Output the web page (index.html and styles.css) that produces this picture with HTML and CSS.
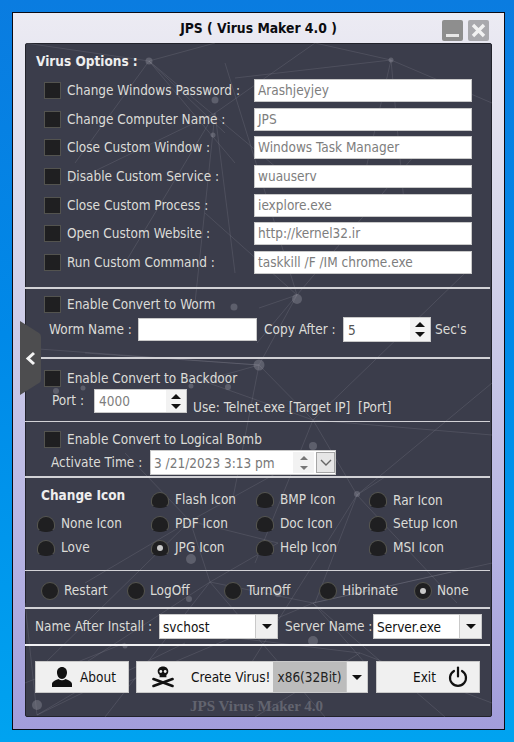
FILE: index.html
```html
<!DOCTYPE html>
<html lang="en">
<head>
<meta charset="utf-8">
<title>JPS Virus Maker 4.0</title>
<link rel="stylesheet" href="styles.css">
</head>
<body>
<div class="window">
  <header class="titlebar">
    <span></span>
    <h1 class="title">JPS ( Virus Maker 4.0 )</h1>
    <div class="winbtns">
      <div class="winbtn min"><svg width="21" height="21" viewBox="0 0 21 21"><rect x="4" y="14" width="13" height="3" fill="#e8e8e8"/></svg></div>
      <div class="winbtn close"><svg width="21" height="21" viewBox="0 0 21 21"><path d="M5 5l11 11M16 5L5 16" stroke="#f2f2f2" stroke-width="3.4"/></svg></div>
    </div>
  </header>
  <main class="panel">
    <svg class="net" width="467" height="674" viewBox="0 0 467 674">
      <g stroke="#8a8c98" stroke-opacity=".24" stroke-width="1" fill="none">
        <path d="M124 18L0 0M124 18L200 90M124 18L50 120M124 18L190 0M124 18L210 120M124 18L270 140"/>
        <path d="M366 17L340 130M366 17L380 170M366 17L290 0M366 17L467 60M366 17L210 35"/>
        <path d="M190 70L290 0M190 70L100 220M190 70L210 230M190 70L45 140M190 70L170 260"/>
        <path d="M272 252L234 265M272 252L232 300M272 252L234 322M272 252L180 170M272 252L200 20M272 252L400 100"/>
        <path d="M234 322L170 340M234 322L288 377M234 322L60 310M234 322L0 305M234 322L207 460"/>
        <path d="M288 377L332 452M288 377L467 392M288 377L178 338M288 377L230 520M288 377L440 230"/>
        <path d="M332 452L360 434M332 452L290 560M332 452L432 560M332 452L220 630M332 452L467 340"/>
        <path d="M165 478L100 410M165 478L185 539M165 478L253 500M165 478L20 620M165 478L60 540M165 478L270 420"/>
        <path d="M185 539L253 500M185 539L80 674M185 539L300 674M185 539L288 560M185 539L60 620"/>
        <path d="M288 560L426 529M288 560L420 674M288 560L100 640M288 560L340 620M288 560L467 520"/>
        <path d="M12 672L100 620M12 672L0 560M12 672L160 600M335 610L467 660M335 610L230 674M335 610L170 590M100 600L0 640"/>
      </g>
      <g fill="#9a9ca6" fill-opacity=".36">
        <circle cx="124" cy="18" r="3.5"/><circle cx="366" cy="17" r="2.5"/><circle cx="190" cy="57" r="3.5"/>
        <circle cx="188" cy="92" r="2.5"/><circle cx="209" cy="264" r="3.5"/><circle cx="272" cy="256" r="5"/>
        <circle cx="234" cy="322" r="5.5"/><circle cx="58" cy="345" r="2.5"/><circle cx="166" cy="343" r="2.5"/>
        <circle cx="203" cy="344" r="3"/><circle cx="288" cy="403" r="4"/><circle cx="332" cy="451" r="3"/>
        <circle cx="166" cy="516" r="5"/><circle cx="164" cy="556" r="3"/><circle cx="253" cy="551" r="3"/>
        <circle cx="288" cy="598" r="5"/><circle cx="426" cy="577" r="1.5"/><circle cx="336" cy="635" r="5"/>
        <circle cx="100" cy="603" r="2.5"/><circle cx="12" cy="662" r="5"/><circle cx="31" cy="348" r="3"/>
      </g>
    </svg>

    <section class="sec sec-options">
      <h2 class="heading">Virus Options :</h2>
      <div class="optgrid">
        <span class="check"></span><label class="lbl">Change Windows Password :</label><div class="field muted">Arashjeyjey</div>
        <span class="check"></span><label class="lbl">Change Computer Name :</label><div class="field muted">JPS</div>
        <span class="check"></span><label class="lbl">Close Custom Window :</label><div class="field muted">Windows Task Manager</div>
        <span class="check"></span><label class="lbl">Disable Custom Service :</label><div class="field muted">wuauserv</div>
        <span class="check"></span><label class="lbl">Close Custom Process :</label><div class="field muted">iexplore.exe</div>
        <span class="check"></span><label class="lbl">Open Custom Website :</label><div class="field muted">http://kernel32.ir</div>
        <span class="check"></span><label class="lbl">Run Custom Command :</label><div class="field muted">taskkill /F /IM chrome.exe</div>
      </div>
    </section>

    <section class="sec sec-worm">
      <div class="checkrow"><span class="check"></span><label class="lbl">Enable Convert to Worm</label></div>
      <div class="wormrow">
        <label class="lbl worm-name">Worm Name :</label>
        <div class="field worm-input"></div>
        <label class="lbl copy-after">Copy After :</label>
        <div class="spin spin-copy"><span class="spin-val">5</span><span class="spin-arrows"><i class="up"></i><i class="down"></i></span></div>
        <label class="lbl secs">Sec's</label>
      </div>
    </section>

    <section class="sec sec-backdoor">
      <div class="checkrow"><span class="check"></span><label class="lbl">Enable Convert to Backdoor</label></div>
      <div class="portrow">
        <label class="lbl port">Port :</label>
        <div class="spin spin-port"><span class="spin-val muted">4000</span><span class="spin-arrows"><i class="up"></i><i class="down"></i></span></div>
        <span class="lbl use">Use: Telnet.exe [Target IP]&nbsp; [Port]</span>
      </div>
    </section>

    <section class="sec sec-bomb">
      <div class="checkrow"><span class="check"></span><label class="lbl">Enable Convert to Logical Bomb</label></div>
      <div class="timerow">
        <label class="lbl activate">Activate Time :</label>
        <div class="date">
          <span class="date-val">3 /21/2023 3:13 pm</span>
          <span class="date-spin"><i class="mini up"></i><i class="mini down"></i></span>
          <span class="date-drop"><svg width="12" height="8" viewBox="0 0 12 8"><path d="M1 1l5 5 5-5" fill="none" stroke="#666" stroke-width="1.4"/></svg></span>
        </div>
      </div>
    </section>

    <section class="sec sec-icons">
      <div class="icongrid">
        <h2 class="heading small">Change Icon</h2>
        <div class="opt up2"><span class="radio cut"></span><span class="lbl">Flash Icon</span></div>
        <div class="opt up2"><span class="radio cut"></span><span class="lbl">BMP Icon</span></div>
        <div class="opt"><span class="radio cut"></span><span class="lbl">Rar Icon</span></div>
        <div class="opt"><span class="radio cut"></span><span class="lbl">None Icon</span></div>
        <div class="opt"><span class="radio cut"></span><span class="lbl">PDF Icon</span></div>
        <div class="opt"><span class="radio cut"></span><span class="lbl">Doc Icon</span></div>
        <div class="opt"><span class="radio cut"></span><span class="lbl">Setup Icon</span></div>
        <div class="opt"><span class="radio cut"></span><span class="lbl">Love</span></div>
        <div class="opt"><span class="radio cut on"></span><span class="lbl">JPG Icon</span></div>
        <div class="opt"><span class="radio cut"></span><span class="lbl">Help Icon</span></div>
        <div class="opt"><span class="radio cut"></span><span class="lbl">MSI Icon</span></div>
      </div>
    </section>

    <section class="sec sec-power">
      <div class="opt w-restart"><span class="radio"></span><span class="lbl">Restart</span></div>
      <div class="opt w-logoff"><span class="radio"></span><span class="lbl">LogOff</span></div>
      <div class="opt w-turnoff"><span class="radio"></span><span class="lbl">TurnOff</span></div>
      <div class="opt w-hib"><span class="radio"></span><span class="lbl">Hibrinate</span></div>
      <div class="opt"><span class="radio on"></span><span class="lbl">None</span></div>
    </section>

    <section class="sec sec-names">
      <label class="lbl nai">Name After Install :</label>
      <div class="combo combo-a"><span class="combo-val">svchost</span><span class="combo-btn"><i class="down"></i></span></div>
      <label class="lbl srv">Server Name :</label>
      <div class="combo combo-b"><span class="combo-val">Server.exe</span><span class="combo-btn"><i class="down"></i></span></div>
    </section>

    <section class="actions">
      <div class="btn btn-about">
        <svg width="22" height="22" viewBox="0 0 22 22"><path d="M11 1c3 0 5 2.300 5 5.500S14 13 11 13 6 9.700 6 6.500 8 1 11 1zM1 21v-3c0-2.500 3-3.500 6.500-5 2 1.600 5 1.600 7 0C18 14.500 21 15.500 21 18v3z" fill="#111"/></svg>
        <span>About</span>
      </div>
      <div class="btn-split">
        <div class="btn-create">
          <svg width="22" height="22" viewBox="0 0 22 22">
            <path d="M11 0.500c3.400 0 5.300 2.200 5.300 4.800 0 1.900-.9 3-1.900 3.700v2.300H7.600V9C6.600 8.300 5.700 7.200 5.700 5.300 5.700 2.700 7.600.5 11 .5z" fill="#111"/>
            <circle cx="8.800" cy="5.500" r="1.400" fill="#eee"/><circle cx="13.200" cy="5.500" r="1.400" fill="#eee"/>
            <path d="M1.500 13l19 7M20.500 13l-19 7" stroke="#111" stroke-width="2.600" stroke-linecap="round"/>
          </svg>
          <span>Create Virus!</span>
        </div>
        <div class="btn-arch">x86(32Bit)</div>
        <div class="btn-caret"><i class="down"></i></div>
      </div>
      <div class="btn btn-exit">
        <span>Exit</span>
        <svg width="20" height="22" viewBox="0 0 20 22"><path d="M6 5a8 8 0 1 0 8 0" fill="none" stroke="#111" stroke-width="2.200" stroke-linecap="round"/><path d="M10 1.500v9" stroke="#111" stroke-width="2.200" stroke-linecap="round"/></svg>
      </div>
    </section>
    <footer class="brand">JPS Virus Maker 4.0</footer>

    <div class="sidetab"><svg width="22" height="75" viewBox="0 0 22 75">
      <path d="M0 0L19 12Q21 13 21 16V58Q21 61 19 62L0 74z" fill="#4d4d4f"/>
      <path d="M14 32l-6 5.500 6 5.500" fill="none" stroke="#f4f4f4" stroke-width="3"/>
    </svg></div>
  </main>
</div>
</body>
</html>
```

FILE: styles.css
```css
* { box-sizing: border-box; }
html, body { margin: 0; height: 742px; overflow: hidden; }
body {
  background: linear-gradient(180deg, #0a7ce0 0, #0089e8 45%, #00a3f0 100%);
  padding: 12px 0 0 12px;
  font-family: "DejaVu Sans", sans-serif;
  font-stretch: condensed;
  font-size: 13.5px;
}
.window {
  width: 493px;
  height: 718px;
  border: 1px solid #0b0b14;
  background: linear-gradient(180deg, #ecebf3 0, #d6d6ea 30%, #b9b7e4 70%, #a29ddb 100%);
  padding: 0 12px 0 12px;
}
.titlebar {
  height: 30px;
  display: grid;
  grid-template-columns: 1fr auto 1fr;
  align-items: center;
  margin-right: -12px;
  margin-left: -12px;
  padding: 0 15px;
}
.title { margin: 0; font-size: 13.8px; font-weight: 700; color: #0c0c10; white-space: nowrap; }
.winbtns { display: flex; gap: 5px; justify-content: flex-end; padding-top: 4px; }
.winbtn { width: 21px; height: 21px; border-radius: 2px; }
.winbtn.min { background: #8e8e8e; }
.winbtn.close { background: #a9a9ad; }
.winbtn svg { display: block; }

.panel {
  position: relative;
  width: 467px;
  height: 674px;
  background: #3b3d4b;
  border: 1px solid #22232b;
  border-radius: 2px;
  color: #dedede;
}
.net { position: absolute; left: -1px; top: -1px; pointer-events: none; filter: blur(0.5px); }
.sec { position: relative; }
.lbl { color: #dcdcd8; white-space: nowrap; font-size: 13.5px; line-height: 17px; }
.heading { margin: 0; font-size: 13.5px; font-weight: 700; color: #eeeeee; line-height: 17px; }
.heading.small { padding-left: 4px; align-self: start; margin-top: -1px; }
.muted { color: #7d7d7d; }

.check {
  display: block;
  width: 17px;
  height: 17px;
  background: #1f1f21;
  border: 1px solid #53534f;
  flex: none;
}
.field {
  background: #fff;
  border: 1px solid #c9c9c9;
  height: 23px;
  font-size: 13.5px;
  line-height: 21px;
  padding-left: 3px;
  white-space: nowrap;
}

.sec-options {
  height: 245px;
  border-bottom: 2px solid #d2d2d6;
  margin: 0 1px 0 -1px;
  padding: 9px 0 0 11px;
}
.optgrid {
  display: grid;
  grid-template-columns: 17px 181px 218px;
  column-gap: 6px;
  row-gap: 5.67px;
  grid-auto-rows: 23px;
  align-items: center;
  margin: 9px 0 0 8px;
}
.checkrow { display: flex; gap: 6px; align-items: center; padding-left: 19px; }

.sec-worm {
  height: 70px;
  padding-top: 7px;
  margin: 0 1px 0 15px;
  border-bottom: 2px solid #d2d2d6;
}
.sec-worm .checkrow { padding-left: 3px; }
.wormrow { display: flex; align-items: center; height: 25px; margin: 4px 0 0 8px; }
.worm-name { width: 89px; flex: none; }
.worm-input { width: 119px; height: 23px; flex: none; }
.copy-after { margin-left: 7px; width: 79px; flex: none; }
.secs { margin-left: 4px; }

.spin {
  display: flex;
  background: #fff;
  border: 1px solid #c9c9c9;
  color: #555;
  font-size: 13.5px;
  align-items: center;
  justify-content: space-between;
  flex: none;
}
.spin-copy { width: 88px; height: 25px; }
.spin-port { width: 93px; height: 24px; }
.spin-val { padding-left: 4px; }
.spin-arrows {
  width: 20px;
  height: 100%;
  background: #f2f2f2;
  display: flex;
  flex-direction: column;
  align-items: center;
  justify-content: center;
  gap: 5px;
}
.up, .down { display: block; width: 0; height: 0; border-left: 5px solid transparent; border-right: 5px solid transparent; }
.up { border-bottom: 5px solid #111; }
.down { border-top: 5px solid #111; }
.mini { border-left-width: 4px; border-right-width: 4px; }
.mini.up { border-bottom: 4px solid #777; }
.mini.down { border-top: 4px solid #777; }

.sec-backdoor {
  height: 63px;
  padding-top: 11px;
  margin: 0 1px 0 -1px;
  border-bottom: 1px solid #d2d2d6;
}
.portrow { display: flex; align-items: flex-start; margin: 2px 0 0 27px; }
.port { width: 42px; margin-top: 3px; flex: none; }
.use { margin: 10px 0 0 6px; }

.sec-bomb {
  height: 56px;
  padding-top: 9px;
  margin: 0 1px 0 -1px;
  border-bottom: 2px solid #d2d2d6;
}
.timerow { display: flex; align-items: center; margin: 2px 0 0 26px; }
.activate { width: 99px; flex: none; }
.date {
  width: 186px;
  height: 25px;
  background: #fff;
  border: 1px solid #c9c9c9;
  display: flex;
  align-items: center;
  color: #777;
  font-size: 13.5px;
  padding-left: 3px;
}
.date-val { width: 139px; white-space: nowrap; }
.date-spin { width: 21px; display: flex; flex-direction: column; align-items: center; gap: 6px; background: #f2f2f2; height: 21px; justify-content: center; }
.date-drop { margin-left: 2px; width: 19px; height: 21px; background: #e6e6e6; border: 1px solid #a5a5a5; display: flex; align-items: center; justify-content: center; }

.sec-icons {
  height: 93px;
  margin: 0 1px 0 -1px;
  padding: 10px 0 0 12px;
  border-bottom: 1px solid #d2d2d6;
}
.icongrid {
  display: grid;
  grid-template-columns: 114px 105px 113px 110px;
  grid-template-rows: 24px 23px 25px;
}
.opt { display: flex; align-items: center; gap: 6px; }
.up2 { margin-top: -1px; }
.radio {
  display: block;
  position: relative;
  width: 18px;
  height: 18px;
  border-radius: 50%;
  background: #1f1f21;
  border: 1px solid #55554f;
  flex: none;
}
.radio.cut { height: 16px; border-radius: 9px 9px 8px 8px / 9px 9px 5px 5px; border-bottom-color: transparent; }
.radio.on::after {
  content: "";
  position: absolute;
  left: 5px;
  top: 5px;
  width: 6px;
  height: 6px;
  border-radius: 50%;
  background: #c9c9c9;
}
.radio.cut.on::after { top: 4px; }

.sec-power {
  height: 38px;
  display: flex;
  align-items: center;
  margin: 0 1px 0 -1px;
  padding: 3px 0 0 16px;
  border-bottom: 2px solid #d2d2d6;
}
.sec-power .opt { gap: 5px; }
.w-restart { width: 86px; }
.w-logoff { width: 97px; }
.w-turnoff { width: 95px; }
.w-hib { width: 95px; }

.sec-names {
  height: 37px;
  display: flex;
  align-items: center;
  margin: 0 1px 0 -1px;
  padding: 0 0 0 10px;
  border-bottom: 2px solid #f0f0f2;
}
.nai { width: 124px; flex: none; }
.srv { margin-left: 7px; width: 88px; flex: none; }
.combo { display: flex; background: #fff; border: 1px solid #c9c9c9; color: #111; font-size: 13.5px; height: 25px; align-items: center; flex: none; }
.combo-a { width: 119px; }
.combo-b { width: 109px; }
.combo-val { flex: 1; padding-left: 3px; }
.combo-btn { width: 22px; height: 100%; background: #efefef; border-left: 1px solid #c9c9c9; display: flex; align-items: center; justify-content: center; }

.actions {
  position: relative;
  display: flex;
  margin: 15px 0 0 9px;
  height: 32px;
}
.btn, .btn-split {
  background: #f0f0f0;
  border: 1px solid #c9c9c9;
  color: #111;
  font-size: 13.5px;
  display: flex;
  align-items: center;
}
.btn-about { width: 94px; padding-left: 15px; gap: 7px; }
.btn-split { width: 232px; margin-left: 7px; }
.btn-create { width: 136px; padding-left: 15px; display: flex; align-items: center; gap: 17px; white-space: nowrap; }
.btn-arch { width: 73px; height: 100%; background: #bcbcbc; color: #222; display: flex; align-items: center; justify-content: center; }
.btn-caret { flex: 1; display: flex; align-items: center; justify-content: center; border-left: 1px solid #c9c9c9; height: 100%; }
.btn-exit { width: 104px; margin-left: 8px; padding-left: 36px; gap: 12px; }
.brand {
  position: relative;
  margin-top: 5px;
  text-align: center;
  font-family: "Liberation Serif", serif;
  font-stretch: normal;
  font-weight: 700;
  font-size: 15px;
  line-height: 17px;
  color: #62646f;
  padding-right: 4px;
}
.sidetab { position: absolute; left: -6px; top: 277px; }
.sidetab svg { display: block; }
```
